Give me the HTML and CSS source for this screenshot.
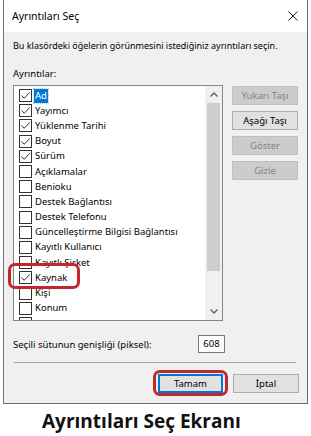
FILE: index.html
```html
<!DOCTYPE html>
<html lang="tr">
  <head>
    <meta charset="UTF-8" />
    <meta name="viewport" content="width=device-width, initial-scale=1.0" />
    <title>Ayrıntıları Seç</title>
    <link rel="stylesheet" href="styles.css">
  </head>
  <body>
    <div class="window">
      <div class="titlebar">
        <span class="title">Ayrıntıları Seç</span>
        <svg class="close" width="10" height="10" viewBox="0 0 10 10">
          <path d="M0.5 0.5 L9.5 9.5 M9.5 0.5 L0.5 9.5" stroke="#222" stroke-width="1" fill="none" />
        </svg>
      </div>
      <div class="dialog-body">
        <p class="desc">Bu klasördeki öğelerin görünmesini istediğiniz ayrıntıları seçin.</p>
        <p class="label">Ayrıntılar:</p>
        <div class="list-row">
          <div class="listbox">
            <div class="items">
              <div class="item checked selected"><span class="box"><svg width="11" height="11" viewBox="0 0 11 11"><path d="M1.5 5.5 L4.2 8.3 L9.8 2.3" /></svg></span><span class="text">Ad</span></div>
              <div class="item checked"><span class="box"><svg width="11" height="11" viewBox="0 0 11 11"><path d="M1.5 5.5 L4.2 8.3 L9.8 2.3" /></svg></span><span class="text">Yayımcı</span></div>
              <div class="item checked"><span class="box"><svg width="11" height="11" viewBox="0 0 11 11"><path d="M1.5 5.5 L4.2 8.3 L9.8 2.3" /></svg></span><span class="text">Yüklenme Tarihi</span></div>
              <div class="item checked"><span class="box"><svg width="11" height="11" viewBox="0 0 11 11"><path d="M1.5 5.5 L4.2 8.3 L9.8 2.3" /></svg></span><span class="text">Boyut</span></div>
              <div class="item checked"><span class="box"><svg width="11" height="11" viewBox="0 0 11 11"><path d="M1.5 5.5 L4.2 8.3 L9.8 2.3" /></svg></span><span class="text">Sürüm</span></div>
              <div class="item"><span class="box"></span><span class="text">Açıklamalar</span></div>
              <div class="item"><span class="box"></span><span class="text">Benioku</span></div>
              <div class="item"><span class="box"></span><span class="text">Destek Bağlantısı</span></div>
              <div class="item"><span class="box"></span><span class="text">Destek Telefonu</span></div>
              <div class="item"><span class="box"></span><span class="text">Güncelleştirme Bilgisi Bağlantısı</span></div>
              <div class="item"><span class="box"></span><span class="text">Kayıtlı Kullanıcı</span></div>
              <div class="item"><span class="box"></span><span class="text">Kayıtlı Şirket</span></div>
              <div class="item checked"><span class="box"><svg width="11" height="11" viewBox="0 0 11 11"><path d="M1.5 5.5 L4.2 8.3 L9.8 2.3" /></svg></span><span class="text">Kaynak</span></div>
              <div class="item"><span class="box"></span><span class="text">Kişi</span></div>
              <div class="item"><span class="box"></span><span class="text">Konum</span></div>
              <div class="item"><span class="box"></span><span class="text"></span></div>
            </div>
            <div class="scrollbar">
              <div class="arrow">
                <svg width="8" height="5" viewBox="0 0 8 5"><path d="M0.5 4.5 L4 1 L7.5 4.5" /></svg>
              </div>
              <div class="track">
                <div class="thumb"></div>
              </div>
              <div class="arrow">
                <svg width="8" height="5" viewBox="0 0 8 5"><path d="M0.5 0.5 L4 4 L7.5 0.5" /></svg>
              </div>
            </div>
          </div>
          <div class="side-buttons">
            <button type="button" disabled>Yukarı Taşı</button>
            <button type="button">Aşağı Taşı</button>
            <button type="button" disabled>Göster</button>
            <button type="button" disabled>Gizle</button>
          </div>
        </div>
        <div class="width-row">
          <span>Seçili sütunun genişliği (piksel):</span>
          <span class="num-box">608</span>
        </div>
        <div class="separator"></div>
        <div class="footer">
          <button type="button" class="default">Tamam</button>
          <button type="button">İptal</button>
        </div>
      </div>
    </div>
    <p class="caption">Ayrıntıları Seç Ekranı</p>

    <div class="mark mark-kaynak"></div>
    <div class="mark mark-ok"></div>
  </body>
</html>
```
FILE: styles.css
```css
body {
  font-family: "Noto Sans", "Open Sans", sans-serif;
  font-size: 9.5px;
  margin: 0;
  padding: 0;
  background-color: #ffffff;
  color: #000000;
  position: relative;
  width: 311px;
  height: 436px;
  overflow: hidden;
}

.window {
  margin-left: 3px;
  width: 303px;
  border: 1px solid #6f6f6f;
  border-top: none;
  background-color: #f0f0f0;
}

.titlebar {
  height: 32px;
  background-color: #ffffff;
  display: flex;
  align-items: center;
  justify-content: space-between;
  padding: 0 9px 0 8px;
}

.title {
  font-size: 10.5px;
}

.close {
  display: block;
}

.dialog-body {
  padding: 6px 8px 10px 9px;
}

.desc {
  margin: 0 0 13px;
  font-size: 9px;
  line-height: 15px;
  white-space: nowrap;
}

.label {
  margin: 0 0 4px;
  line-height: 15px;
}

.list-row {
  display: flex;
  gap: 9px;
}

.listbox {
  width: 208px;
  height: 234px;
  border: 1px solid #828790;
  background-color: #ffffff;
  display: flex;
}

.items {
  flex: 1;
  overflow: hidden;
  padding-top: 2px;
}

.item {
  height: 15.2px;
  display: flex;
  align-items: center;
  padding-left: 5px;
  white-space: nowrap;
}

.box {
  width: 11px;
  height: 11px;
  border: 1px solid #333333;
  background-color: #ffffff;
  flex-shrink: 0;
}

.box svg {
  display: block;
}

.box path {
  stroke: #333333;
  stroke-width: 1;
  fill: none;
}

.text {
  margin-left: 2px;
  padding: 0 1px;
  line-height: 14px;
}

.selected .text {
  background-color: #0078d7;
  color: #ffffff;
  outline: 1px dotted #99c9ef;
}

.scrollbar {
  width: 17px;
  background-color: #f0f0f0;
  display: flex;
  flex-direction: column;
}

.arrow {
  height: 17px;
  display: flex;
  align-items: center;
  justify-content: center;
}

.arrow path {
  stroke: #606060;
  stroke-width: 1.4;
  fill: none;
}

.track {
  flex: 1;
  padding: 0 2px;
}

.thumb {
  height: 168px;
  background-color: #cdcdcd;
}

.side-buttons {
  display: flex;
  flex-direction: column;
  gap: 6px;
  padding-top: 1px;
}

button {
  font-family: inherit;
  font-size: 9.5px;
  width: 66px;
  height: 19px;
  padding: 0;
  background-color: #e1e1e1;
  border: 1px solid #adadad;
  color: #000000;
}

button:disabled {
  background-color: #cccccc;
  border-color: #bfbfbf;
  color: #838383;
}

.width-row {
  display: flex;
  align-items: center;
  justify-content: space-between;
  width: 212px;
  margin-top: 14px;
}

.num-box {
  width: 25px;
  height: 16px;
  line-height: 16px;
  border: 1px solid #7a7a7a;
  background-color: #ffffff;
  text-align: center;
}

.separator {
  margin: 9px 3px 11px 1px;
  border-top: 1px solid #a0a0a0;
}

.footer {
  display: flex;
  justify-content: flex-end;
  gap: 10px;
}

.footer .default {
  width: 65px;
  border: 1px solid #0078d7;
  box-shadow: inset 0 0 0 1px #0078d7;
}

.caption {
  margin: 5px 0 0 42px;
  font-family: "Open Sans", sans-serif;
  font-weight: bold;
  font-size: 19px;
  line-height: 25px;
  color: #111111;
}

.mark {
  position: absolute;
  border: 3px solid #c1272d;
  border-radius: 7px;
  box-sizing: border-box;
}

.mark-kaynak {
  left: 8px;
  top: 263px;
  width: 72px;
  height: 26px;
}

.mark-ok {
  left: 153px;
  top: 370px;
  width: 75px;
  height: 26px;
}
```
